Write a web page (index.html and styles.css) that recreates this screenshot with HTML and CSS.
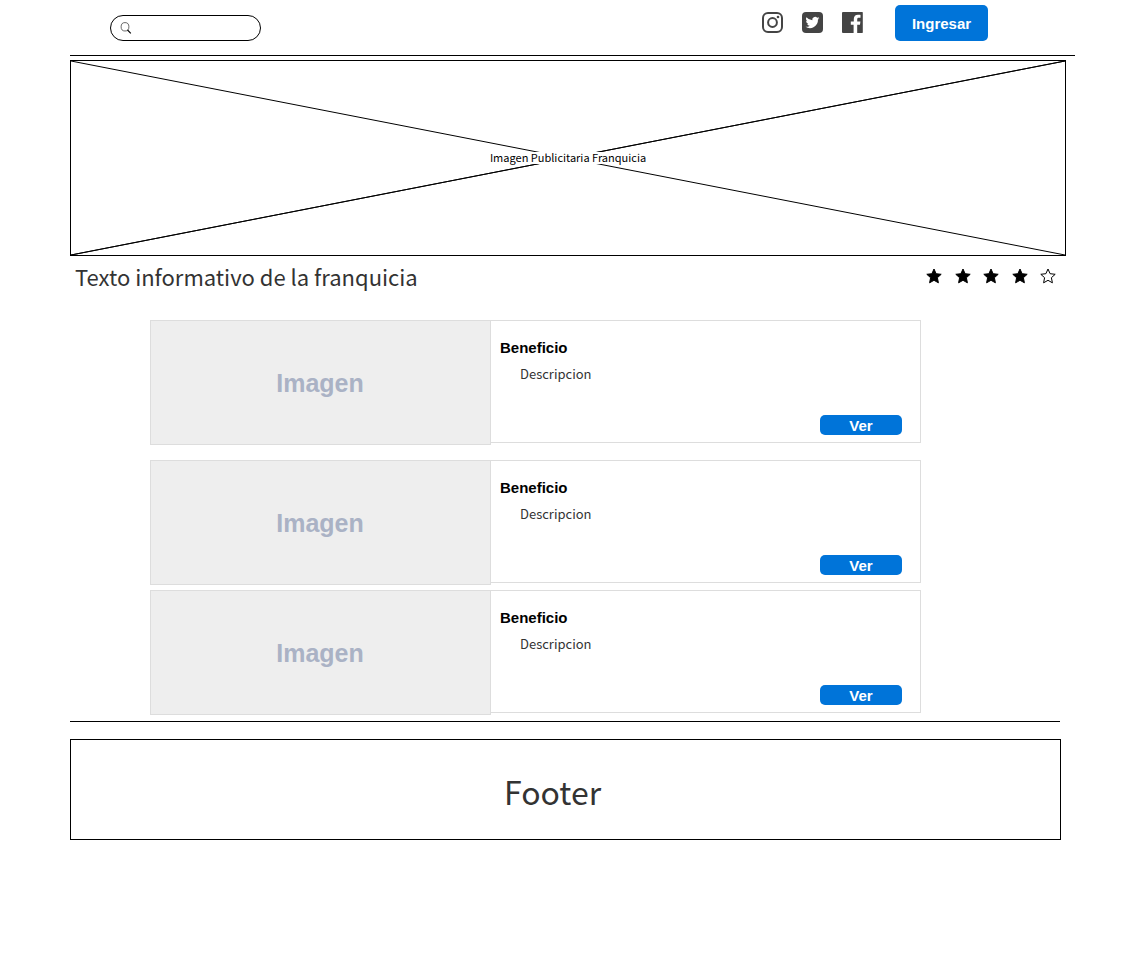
FILE: index.html
```html
<!DOCTYPE html>
<html lang="es">
<head>
<meta charset="utf-8">
<meta name="viewport" content="width=device-width, initial-scale=1">
<title>Franquicia</title>
<link rel="stylesheet" href="styles.css">
</head>
<body>
<svg class="sprite" aria-hidden="true">
  <symbol id="star" viewBox="0 0 16 16">
    <path d="M8 1l2.1 4.700 5.100.6-3.800 3.400 1 5.100L8 12.300l-4.400 2.500 1-5.100L.8 6.300l5.100-.6z"/>
  </symbol>
</svg>
<div class="page">
  <header class="header">
    <label class="search">
      <svg class="search-icon" viewBox="0 0 12 12" aria-hidden="true"><ellipse cx="5" cy="4.800" rx="3.900" ry="4.200" fill="none" stroke="#444" stroke-width=".8"/><path d="M7.500 8l3.300 3.300" fill="none" stroke="#000" stroke-width="1.200"/></svg>
      <input class="search-input" type="search" aria-label="Buscar">
    </label>
    <nav class="social">
      <a href="#" aria-label="Instagram"><svg viewBox="0 0 21 21"><rect x="1" y="1" width="19" height="19" rx="5" fill="none" stroke="currentColor" stroke-width="2"/><circle cx="10.500" cy="10.500" r="4.400" fill="none" stroke="currentColor" stroke-width="2"/><circle cx="16" cy="5" r="1.300" fill="currentColor"/></svg></a>
      <a href="#" aria-label="Twitter"><svg viewBox="0 0 21 21"><rect width="21" height="21" rx="4" fill="currentColor"/><path transform="translate(3.500 3.500) scale(.58)" fill="#fff" d="M24 4.600a10 10 0 0 1-2.800.8 5 5 0 0 0 2.100-2.700c-1 .6-2 1-3.100 1.200a4.900 4.900 0 0 0-8.400 4.500A14 14 0 0 1 1.700 3.200a4.900 4.900 0 0 0 1.500 6.500 4.900 4.900 0 0 1-2.200-.6 4.900 4.900 0 0 0 3.900 4.900 5 5 0 0 1-2.200.1 4.900 4.900 0 0 0 4.600 3.400A9.900 9.900 0 0 1 0 19.500a14 14 0 0 0 21.500-12.400A10 10 0 0 0 24 4.600z"/></svg></a>
      <a href="#" aria-label="Facebook"><svg viewBox="0 0 21 21"><path fill="currentColor" d="M1 0h19a.8.8 0 0 1 .8 1v19a.8.8 0 0 1-.8 1h-4.800v-8.200h2.800l.4-3.300h-3.200V7.400c0-1 .3-1.600 1.600-1.600h1.700V2.900c-.3 0-1.300-.1-2.500-.1-2.500 0-4.200 1.500-4.200 4.200v2.500H8.800v3.300h2.800V21H1a1 1 0 0 1-1-1V1a1 1 0 0 1 1-1z"/></svg></a>
    </nav>
    <button class="button login" type="button">Ingresar</button>
  </header>

  <main>
    <figure class="banner">
      <svg class="banner-cross" viewBox="0 0 100 100" preserveAspectRatio="none" aria-hidden="true"><path d="M0 0L100 100"/><path d="M0 100L100 0"/><path d="M0 100L100 0"/></svg>
      <figcaption class="banner-label">Imagen Publicitaria Franquicia</figcaption>
    </figure>

    <section class="info">
      <h1 class="info-title">Texto informativo de la franquicia</h1>
      <div class="rating" role="img" aria-label="4 de 5 estrellas">
        <svg class="star"><use href="#star"/></svg>
        <svg class="star"><use href="#star"/></svg>
        <svg class="star"><use href="#star"/></svg>
        <svg class="star"><use href="#star"/></svg>
        <svg class="star star-empty"><use href="#star"/></svg>
      </div>
    </section>

    <section class="benefits">
      <article class="card card-featured">
        <div class="card-image">Imagen</div>
        <div class="card-body">
          <h2 class="card-title">Beneficio</h2>
          <p class="card-text">Descripcion</p>
          <button class="button view" type="button">Ver</button>
        </div>
      </article>
      <article class="card">
        <div class="card-image">Imagen</div>
        <div class="card-body">
          <h2 class="card-title">Beneficio</h2>
          <p class="card-text">Descripcion</p>
          <button class="button view" type="button">Ver</button>
        </div>
      </article>
      <article class="card">
        <div class="card-image">Imagen</div>
        <div class="card-body">
          <h2 class="card-title">Beneficio</h2>
          <p class="card-text">Descripcion</p>
          <button class="button view" type="button">Ver</button>
        </div>
      </article>
    </section>
  </main>

  <hr class="divider">
  <footer class="footer">Footer</footer>
</div>
</body>
</html>
```

FILE: styles.css
```css
* {
  box-sizing: border-box;
}

body {
  margin: 0;
  background: #fff;
  color: #333;
  font-family: "Noto Sans CJK SC", "Noto Sans", sans-serif;
}

.sprite {
  display: none;
}

.page {
  padding: 0 51px 0 70px;
}

.header {
  display: flex;
  align-items: flex-start;
  padding: 5px 87px 14px 40px;
  border-bottom: 1px solid #000;
}

.search {
  display: flex;
  align-items: center;
  width: 151px;
  height: 26px;
  margin-top: 10px;
  padding: 0 9px;
  border: 1px solid #000;
  border-radius: 13px;
}

.search-icon {
  flex: none;
  width: 12px;
  height: 12px;
}

.search-input {
  flex: 1;
  min-width: 0;
  padding: 0 4px;
  border: 0;
  outline: 0;
  background: none;
}

.social {
  display: flex;
  gap: 19px;
  margin: 7px 32px 0 auto;
}

.social a {
  color: #444;
}

.social svg {
  display: block;
  width: 21px;
  height: 21px;
}

.button {
  padding: 0;
  border: 0;
  background: #0074d9;
  color: #fff;
  font: bold 15px "Liberation Sans", Arial, sans-serif;
}

.login {
  width: 93px;
  height: 36px;
  border-radius: 5px;
}

.banner {
  display: grid;
  place-items: center;
  height: 196px;
  margin: 4px 9px 0 0;
  border: 1px solid #000;
}

.banner-cross,
.banner-label {
  grid-area: 1 / 1;
}

.banner-cross {
  width: 100%;
  height: 194px;
  stroke: #000;
  stroke-width: 1px;
}

.banner-cross path {
  vector-effect: non-scaling-stroke;
}

.banner-label {
  z-index: 1;
  padding-bottom: 2px;
  background: #fff;
  color: #000;
  font-size: 11px;
  line-height: 10px;
}

.info {
  display: flex;
  align-items: center;
  justify-content: space-between;
  height: 40px;
  padding: 0 19px 0 5px;
}

.info-title {
  margin: 0;
  font-size: 22px;
  font-weight: 400;
  line-height: 36px;
}

.rating {
  display: flex;
  justify-content: space-between;
  width: 130px;
}

.star {
  width: 16px;
  height: 16px;
  fill: #000;
  stroke: #000;
}

.star-empty {
  fill: #fff;
}

.benefits {
  display: grid;
  gap: 5px;
  padding: 24px 154px 0 80px;
}

.card {
  display: grid;
  grid-template-columns: 341fr 430fr;
  align-items: start;
}

.card-featured {
  margin-bottom: 10px;
}

.card-image {
  display: grid;
  place-items: center;
  height: 125px;
  padding: 2px 1px 0 0;
  border: 1px solid #ddd;
  background: #eee;
  color: #aab2c5;
  font: bold 25px "Liberation Sans", Arial, sans-serif;
}

.card-body {
  display: flex;
  flex-direction: column;
  height: 123px;
  padding: 18px 18px 7px 9px;
  border: 1px solid #ddd;
  border-left: 0;
}

.card-title {
  margin: 0;
  color: #000;
  font: bold 15px/18px "Liberation Sans", Arial, sans-serif;
}

.card-text {
  margin: 7px 0 0 20px;
  font-size: 13px;
  line-height: 20px;
}

.view {
  align-self: flex-end;
  width: 82px;
  height: 20px;
  margin-top: auto;
  border-radius: 5px;
}

.divider {
  margin: 6px 15px 17px 0;
  border: 0;
  border-top: 1px solid #000;
}

.footer {
  margin-right: 14px;
  padding: 26px 26px 23px 0;
  border: 1px solid #000;
  font-size: 32px;
  line-height: 50px;
  text-align: center;
}
```
